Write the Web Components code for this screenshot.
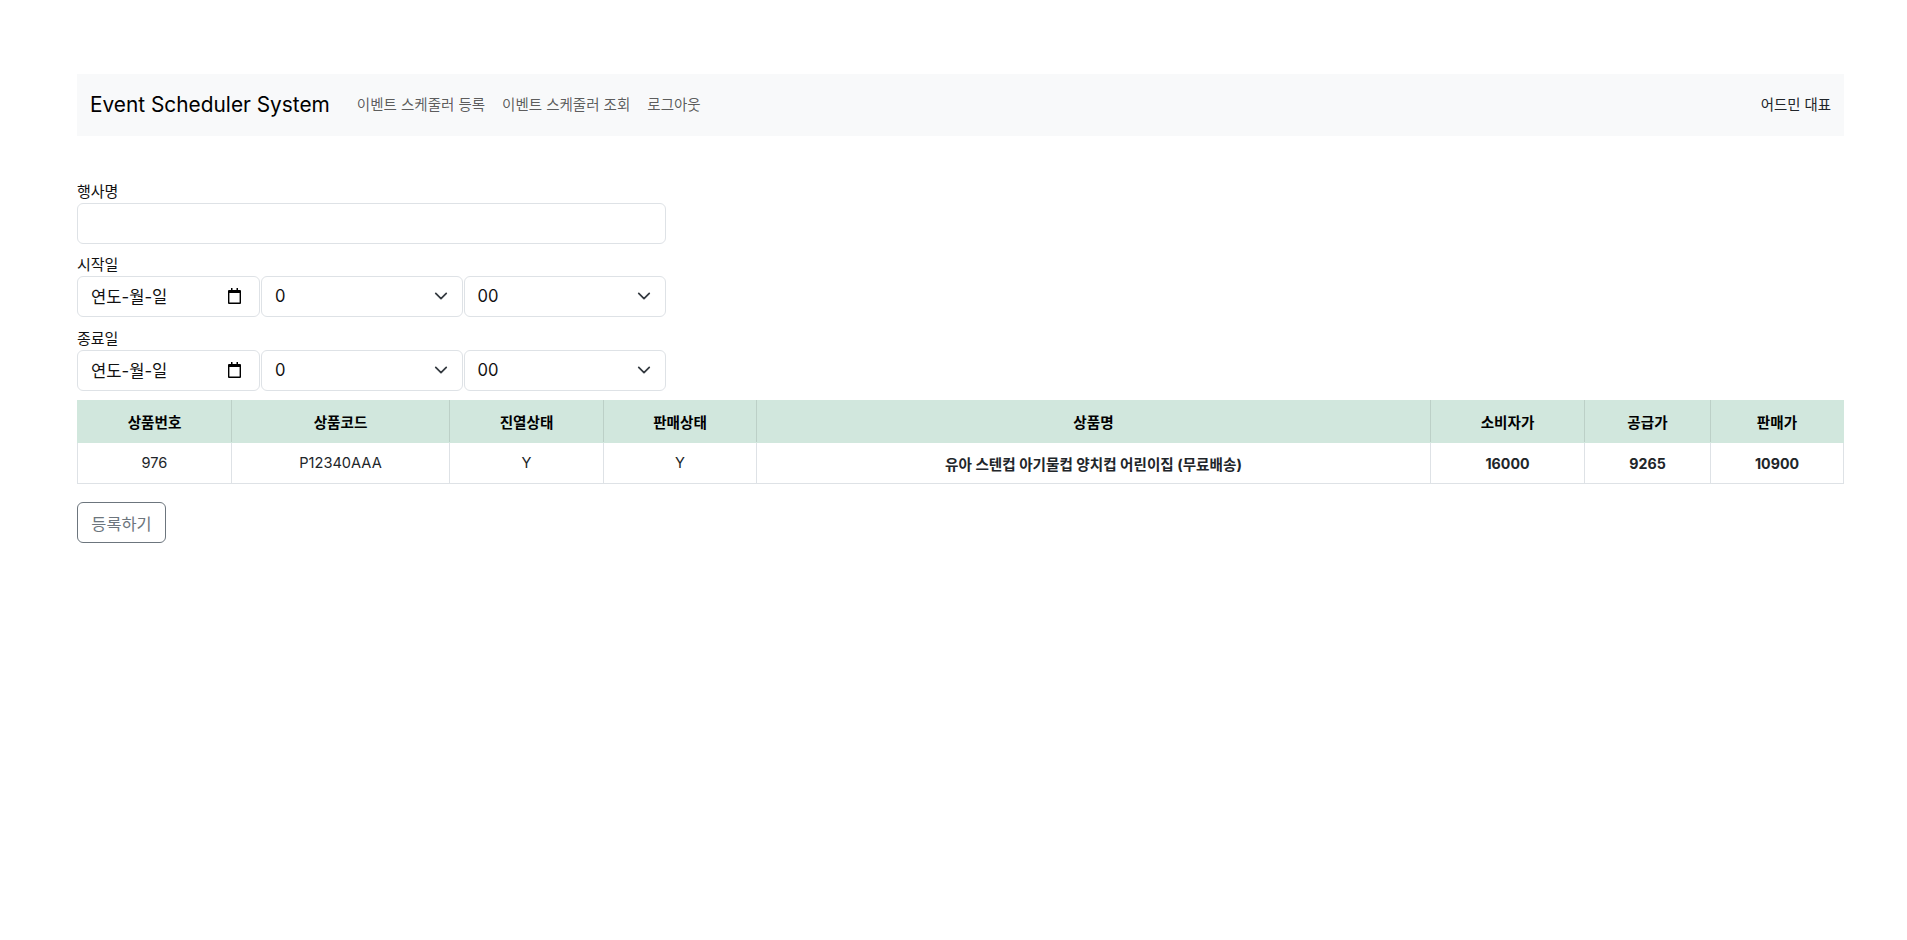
<!DOCTYPE html>
<html lang="ko">
<head>
<meta charset="utf-8">
<title>Event Scheduler System</title>
<style>
  body { margin: 0; background: #fff; font-family: Inter, "Noto Sans CJK KR", sans-serif; color: #212529; }
</style>
</head>
<body>
<app-page>
  <top-nav slot="nav" brand="Event Scheduler System" user="어드민 대표">
    <a href="#">이벤트 스케줄러 등록</a>
    <a href="#">이벤트 스케줄러 조회</a>
    <a href="#">로그아웃</a>
  </top-nav>
  <form-field label="행사명"><text-box></text-box></form-field>
  <form-field label="시작일"><date-time-row></date-time-row></form-field>
  <form-field label="종료일"><date-time-row></date-time-row></form-field>
  <product-table></product-table>
  <outline-button>등록하기</outline-button>
</app-page>

<script>
const FONT = 'Inter, "Noto Sans CJK KR", sans-serif';

class appPage extends HTMLElement {
  constructor() {
    super();
    this.attachShadow({ mode: "open" });
    this.shadowRoot.innerHTML = `
      <style>
        :host { display: block; padding: 74px 63px 0 77px; font-family: ${FONT}; }
        .form { margin-top: 42px; }
      </style>
      <slot name="nav"></slot>
      <div class="form"><slot></slot></div>
    `;
  }
}
customElements.define("app-page", appPage);

class topNav extends HTMLElement {
  constructor() {
    super();
    this.attachShadow({ mode: "open" });
  }
  connectedCallback() {
    this.shadowRoot.innerHTML = `
      <style>
        :host { display: flex; align-items: center; box-sizing: border-box; height: 62px; padding: 0 13px 2px; background: #f8f9fa; }
        .brand { font-size: 20.85px; color: #000; margin-right: 27px; }
        .links { display: flex; gap: 17px; flex: 1; font-size: 14.5px; margin-bottom: 2px; }
        ::slotted(a) { color: rgba(0,0,0,.65); text-decoration: none; }
        .user { font-size: 14.4px; color: #212529; margin-bottom: 2px; }
      </style>
      <span class="brand">${this.getAttribute("brand")}</span>
      <div class="links"><slot></slot></div>
      <span class="user">${this.getAttribute("user")}</span>
    `;
  }
}
customElements.define("top-nav", topNav);

class formField extends HTMLElement {
  constructor() {
    super();
    this.attachShadow({ mode: "open" });
  }
  connectedCallback() {
    this.shadowRoot.innerHTML = `
      <style>
        :host { display: block; width: 589px; margin-bottom: 8px; }
        label { display: block; font-size: 15px; line-height: 27px; color: #111; height: 25px; }
      </style>
      <label>${this.getAttribute("label")}</label>
      <slot></slot>
    `;
  }
}
customElements.define("form-field", formField);

class textBox extends HTMLElement {
  constructor() {
    super();
    this.attachShadow({ mode: "open" });
    this.shadowRoot.innerHTML = `
      <style>
        :host { display: block; margin-bottom: -1px; }
        input { display: block; box-sizing: border-box; width: 100%; height: 41px; border: 1px solid #dee2e6; border-radius: 6px; padding: 6px 12px; font: 16px ${FONT}; background: #fff; }
      </style>
      <input type="text">
    `;
  }
}
customElements.define("text-box", textBox);

class dateTimeRow extends HTMLElement {
  constructor() {
    super();
    this.attachShadow({ mode: "open" });
    const chevron = `<svg width="14" height="14" viewBox="0 0 16 16"><path d="m2 5 6 6 6-6" fill="none" stroke="#343a40" stroke-width="2" stroke-linecap="round" stroke-linejoin="round"/></svg>`;
    this.shadowRoot.innerHTML = `
      <style>
        :host { display: grid; grid-template-columns: 183px 202.500px 203.500px; height: 41px; }
        .box { box-sizing: border-box; display: flex; align-items: center; justify-content: space-between; height: 41px; border: 1px solid #dee2e6; border-radius: 6px; padding: 0 14px 1px 13px; font-size: 16.6px; color: #111; background: #fff; }
        .box.sel { margin-left: 1px; }
        .box.date { padding-right: 18px; }
        svg { display: block; flex: none; }
      </style>
      <div class="box date">
        <span>연도-월-일</span>
        <svg width="13" height="16" viewBox="0 0 13 16"><path fill-rule="evenodd" d="M3 0h1.500v2h4V0H10v2h2a1 1 0 0 1 1 1v12a1 1 0 0 1-1 1H1a1 1 0 0 1-1-1V3a1 1 0 0 1 1-1h2zM1.400 5v9.500h10.200V5z" fill="#000"/></svg>
      </div>
      <div class="box sel"><span>0</span>${chevron}</div>
      <div class="box sel"><span>00</span>${chevron}</div>
    `;
  }
}
customElements.define("date-time-row", dateTimeRow);

class productTable extends HTMLElement {
  constructor() {
    super();
    this.attachShadow({ mode: "open" });
    const cols = [154, 218, 154, 153, 674, 154, 126, 133];
    const head = ["상품번호", "상품코드", "진열상태", "판매상태", "상품명", "소비자가", "공급가", "판매가"];
    const row = ["976", "P12340AAA", "Y", "Y", "유아 스텐컵 아기물컵 양치컵 어린이집 (무료배송)", "16000", "9265", "10900"];
    this.shadowRoot.innerHTML = `
      <style>
        :host { display: block; width: 1766px; margin: 9px 0 18px; }
        table { width: 100%; table-layout: fixed; border-collapse: collapse; font-size: 14.6px; text-align: center; color: #212529; }
        th, td { border: 1px solid #dee2e6; padding: 0; box-sizing: border-box; }
        th { height: 42px; background: #d1e7dd; border-color: #d1e7dd #bcd0c7; font-weight: 700; color: #000; }
        th:first-child { border-left-color: #d1e7dd; }
        th:last-child { border-right-color: #d1e7dd; }
        td { height: 41px; background: #fff; }
        td.b { font-weight: 700; }
        td.n { font-size: 14.2px; }
      </style>
      <table>
        <colgroup>${cols.map(w => `<col style="width:${w}px">`).join("")}</colgroup>
        <tr>${head.map(t => `<th>${t}</th>`).join("")}</tr>
        <tr>${row.map((t, i) => `<td class="${i > 3 ? "b" : ""} ${i > 4 ? "n" : ""}">${t}</td>`).join("")}</tr>
      </table>
    `;
  }
}
customElements.define("product-table", productTable);

class outlineButton extends HTMLElement {
  constructor() {
    super();
    this.attachShadow({ mode: "open" });
    this.shadowRoot.innerHTML = `
      <style>
        :host { display: inline-block; }
        button { display: block; box-sizing: border-box; height: 41px; width: 89px; border: 1px solid #6c757d; border-radius: 6px; background: transparent; color: #6c757d; font: 16.4px ${FONT}; padding: 0; }
      </style>
      <button type="button"><slot></slot></button>
    `;
  }
}
customElements.define("outline-button", outlineButton);
</script>
</body>
</html>
